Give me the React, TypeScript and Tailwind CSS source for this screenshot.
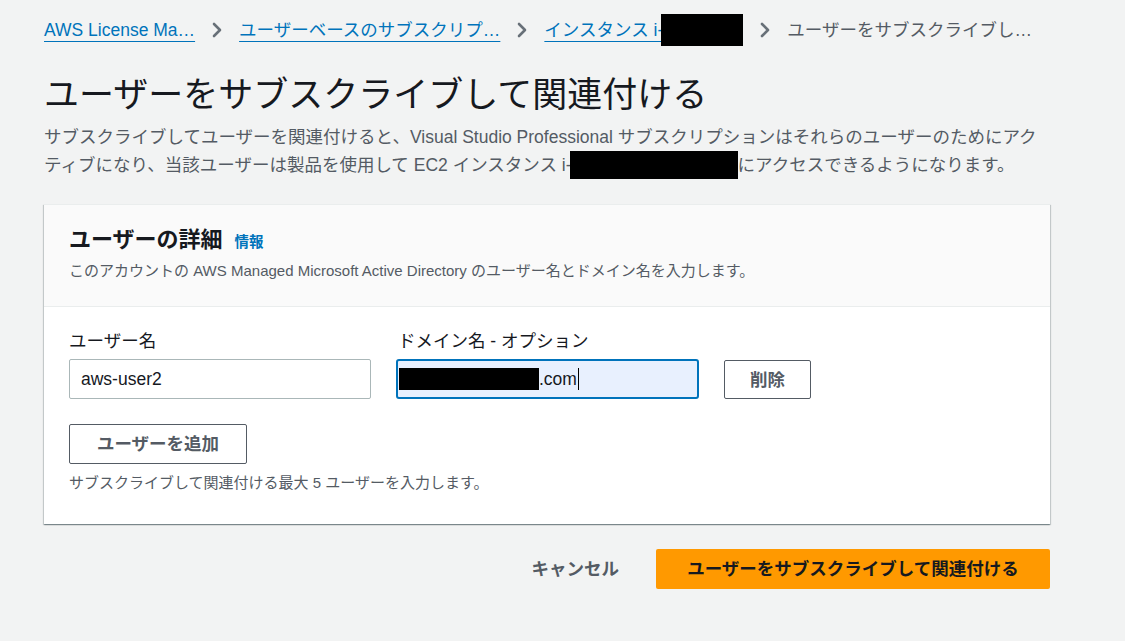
import React from 'react';

const font = { fontFamily: '"Liberation Sans", "Noto Sans CJK JP", sans-serif' };

const Chevron: React.FC = () => (
  <svg width="10" height="16" viewBox="0 0 10 16" className="shrink-0 mx-[17px]">
    <polyline points="2,2 8,8 2,14" fill="none" stroke="#687078" strokeWidth="2.6" strokeLinecap="round" strokeLinejoin="round" />
  </svg>
);

const Redacted: React.FC<{ className?: string }> = ({ className = '' }) => (
  <span className={`inline-block bg-black align-middle ${className}`} />
);

export default function App() {
  return (
    <div className="min-h-screen bg-[#f2f3f3] text-[#16191f]" style={font}>
      <div className="w-[1006px] ml-[44px]">
        {/* breadcrumbs */}
        <nav className="flex items-center pt-[14px] text-[17.5px] leading-[22px] whitespace-nowrap">
          <a className="text-[#0073bb] underline underline-offset-[5px] decoration-1">AWS License Ma…</a>
          <Chevron />
          <a className="text-[#0073bb] underline underline-offset-[5px] decoration-1">ユーザーベースのサブスクリプ…</a>
          <Chevron />
          <a className="text-[#0073bb] underline underline-offset-[5px] decoration-1 flex items-center">
            インスタンス i-
            <Redacted className="w-[82px] h-[32px] -ml-[2px]" />
          </a>
          <Chevron />
          <span className="text-[#545b64]">ユーザーをサブスクライブし…</span>
        </nav>

        {/* title */}
        <h1 className="mt-[27px] text-[35px] leading-[44px] font-normal whitespace-nowrap">
          ユーザーをサブスクライブして関連付ける
        </h1>
        <p className="mt-[6px] text-[17.5px] leading-[28px] text-[#545b64] whitespace-nowrap">
          サブスクライブしてユーザーを関連付けると、Visual Studio Professional サブスクリプションはそれらのユーザーのためにアク
          <br />
          ティブになり、当該ユーザーは製品を使用して EC2 インスタンス i-
          <Redacted className="w-[168px] h-[28px] -ml-[2px] -mt-[2px]" />
          にアクセスできるようになります。
        </p>

        {/* panel */}
        <section className="mt-[25px] bg-white border-t border-[#eaeded] shadow-[0_1px_1px_0_rgba(0,28,36,0.3),1px_1px_1px_0_rgba(0,28,36,0.15),-1px_1px_1px_0_rgba(0,28,36,0.15)]">
          <header className="bg-[#fafafa] border-b border-[#eaeded] px-[25px] pt-[20px] pb-[24px]">
            <div className="flex items-baseline gap-[12px]">
              <h2 className="text-[22px] leading-[30px] font-bold">ユーザーの詳細</h2>
              <a className="text-[14.5px] font-bold text-[#0073bb]">情報</a>
            </div>
            <p className="mt-[5px] text-[15px] leading-[22px] text-[#545b64]">
              このアカウントの AWS Managed Microsoft Active Directory のユーザー名とドメイン名を入力します。
            </p>
          </header>

          <div className="px-[25px] pt-[22px] pb-[30px]">
            <div className="flex items-end gap-[25px]">
              <label className="flex flex-col gap-[5px]">
                <span className="text-[17.5px] leading-[25px]">ユーザー名</span>
                <div className="w-[302px] h-[40px] border border-[#aab7b8] rounded-[2px] bg-white flex items-center px-[11px] text-[17.5px]">
                  aws-user2
                </div>
              </label>
              <label className="flex flex-col gap-[5px]">
                <span className="text-[17.5px] leading-[25px] pl-[2px]">ドメイン名 - オプション</span>
                <div className="w-[303px] h-[40px] border-2 border-[#0073bb] rounded-[3px] bg-[#e8f0fe] flex items-center pl-[1px] text-[17.5px]">
                  <Redacted className="w-[140px] h-[22px]" />
                  <span>.com</span>
                  <span className="inline-block w-[1px] h-[22px] bg-black ml-[1px]" />
                </div>
              </label>
              <button className="w-[87px] h-[39px] border border-[#545b64] rounded-[2px] bg-white text-[17.5px] font-bold text-[#545b64]">
                削除
              </button>
            </div>

            <button className="mt-[25px] w-[178px] h-[40px] border border-[#545b64] rounded-[2px] bg-white text-[17.5px] font-bold text-[#545b64]">
              ユーザーを追加
            </button>
            <p className="mt-[8px] text-[15px] leading-[22px] text-[#545b64]">
              サブスクライブして関連付ける最大 5 ユーザーを入力します。
            </p>
          </div>
        </section>

        {/* actions */}
        <div className="mt-[25px] flex justify-end items-center gap-[17px]">
          <button className="px-[20px] h-[40px] text-[17.5px] font-bold text-[#545b64]">キャンセル</button>
          <button className="w-[394px] h-[40px] bg-[#ff9900] rounded-[2px] text-[17.5px] font-bold text-[#16191f]">
            ユーザーをサブスクライブして関連付ける
          </button>
        </div>
      </div>
    </div>
  );
}
